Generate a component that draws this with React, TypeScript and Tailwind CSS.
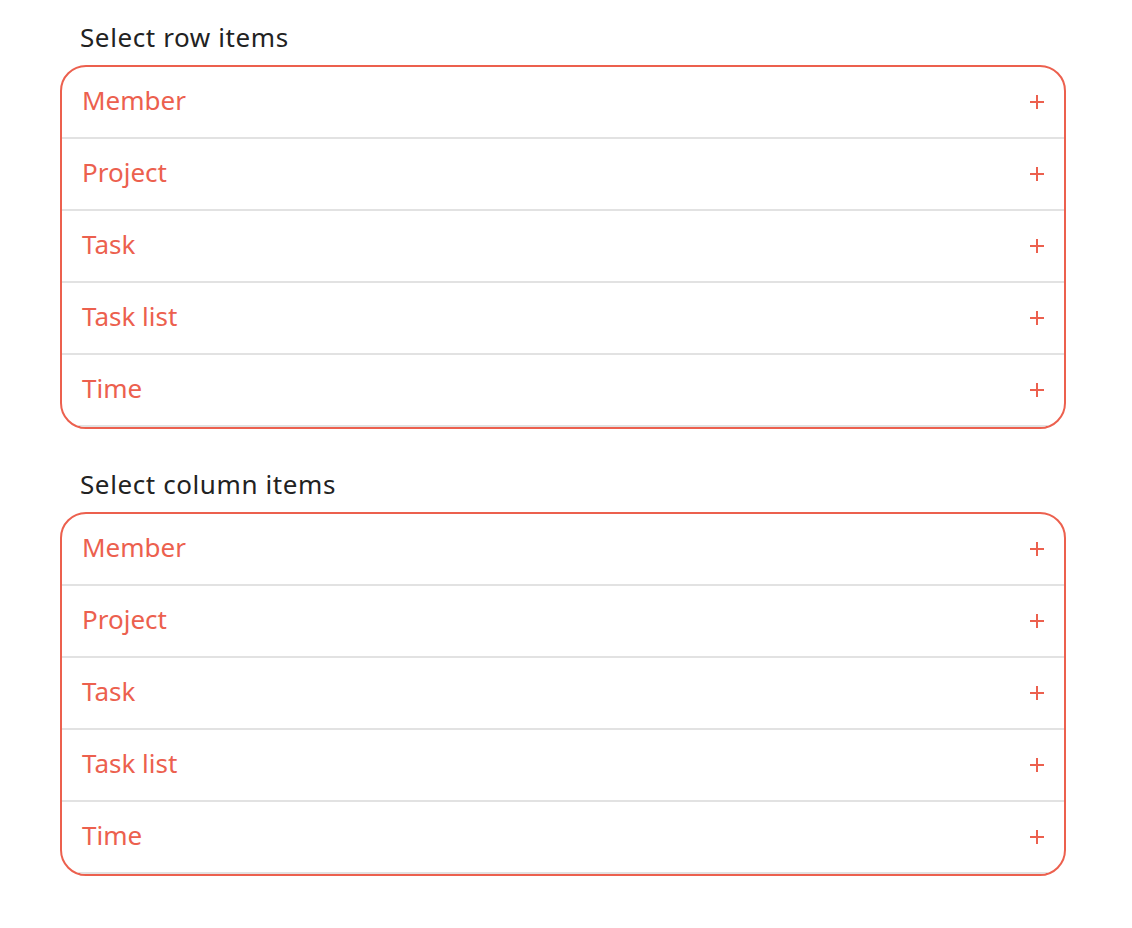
import React from 'react';

const items = ['Member', 'Project', 'Task', 'Task list', 'Time'];

const PlusIcon = () => (
  <svg width="14" height="14" viewBox="0 0 14 14" className="shrink-0">
    <path d="M7 0v14M0 7h14" stroke="#ec604e" strokeWidth="2" />
  </svg>
);

const ItemGroup: React.FC<{ title: string }> = ({ title }) => (
  <section>
    <h2 className="pl-5 text-[26px] tracking-[0.6px] leading-8 text-[#222] mb-3">{title}</h2>
    <div className="w-[1006px] rounded-[26px] border-2 border-[#ec604e] overflow-hidden">
      {items.map((item) => (
        <button
          key={item}
          className="flex w-full h-[72px] items-center justify-between border-b-2 border-[#e2e2e2] pl-5 pr-5 text-left"
        >
          <span className="text-[26px] pb-1 text-[#ec604e]">{item}</span>
          <PlusIcon />
        </button>
      ))}
    </div>
  </section>
);

export default function App() {
  return (
    <div className="min-h-[928px] bg-white pl-[60px] pt-[21px] flex flex-col gap-[39px]" style={{ fontFamily: '"Noto Sans", sans-serif' }}>
      <ItemGroup title="Select row items" />
      <ItemGroup title="Select column items" />
    </div>
  );
}
